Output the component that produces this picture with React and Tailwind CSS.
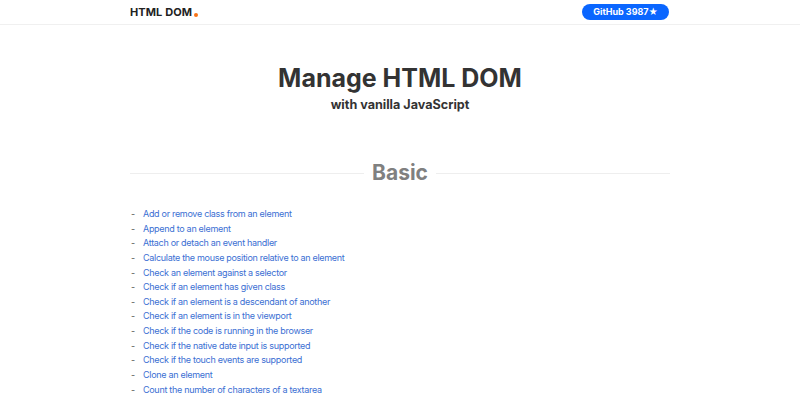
import React from "react";

const basics = [
  "Add or remove class from an element",
  "Append to an element",
  "Attach or detach an event handler",
  "Calculate the mouse position relative to an element",
  "Check an element against a selector",
  "Check if an element has given class",
  "Check if an element is a descendant of another",
  "Check if an element is in the viewport",
  "Check if the code is running in the browser",
  "Check if the native date input is supported",
  "Check if the touch events are supported",
  "Clone an element",
  "Count the number of characters of a textarea",
];

const App = () => {
  return (
    <div className="min-h-screen bg-white font-['Inter',sans-serif] text-[#333]">
      <header className="border-b border-[#f0f0f0]">
        <div className="mx-auto flex h-[24px] w-[540px] items-center justify-between">
          <a className="flex items-end text-[11px] font-bold tracking-[0.1px] text-[#222]">
            HTML DOM
            <span className="mb-[3px] ml-[2px] h-[4px] w-[4px] rounded-full bg-[#f97316]"></span>
          </a>
          <a className="mr-[1px] flex h-[16px] items-center rounded-full bg-[#0a66ff] px-[11px] text-[9px] font-bold text-white">
            GitHub 3987★
          </a>
        </div>
      </header>

      <main className="mx-auto w-[540px]">
        <div className="pt-[38px] text-center">
          <h1 className="text-[25px] font-bold leading-[30px] text-[#333]">
            Manage HTML DOM
          </h1>
          <h2 className="mt-[4px] text-[12.6px] font-bold leading-[16px] text-[#333]">
            with vanilla JavaScript
          </h2>
        </div>

        <div className="mt-[46px] flex items-center gap-[8px]">
          <div className="h-px flex-1 bg-[#eee]"></div>
          <h3 className="text-[21px] font-bold leading-[28px] text-[#808080]">Basic</h3>
          <div className="h-px flex-1 bg-[#eee]"></div>
        </div>

        <ul className="mt-[20px]">
          {basics.map((item) => (
            <li key={item} className="flex text-[9px] leading-[14.62px] tracking-[-0.3px]">
              <span className="w-[13px] pl-[1px] text-[#555]">-</span>
              <a className="text-[#3b6fd3]">{item}</a>
            </li>
          ))}
        </ul>
      </main>
    </div>
  );
};

export default App;
